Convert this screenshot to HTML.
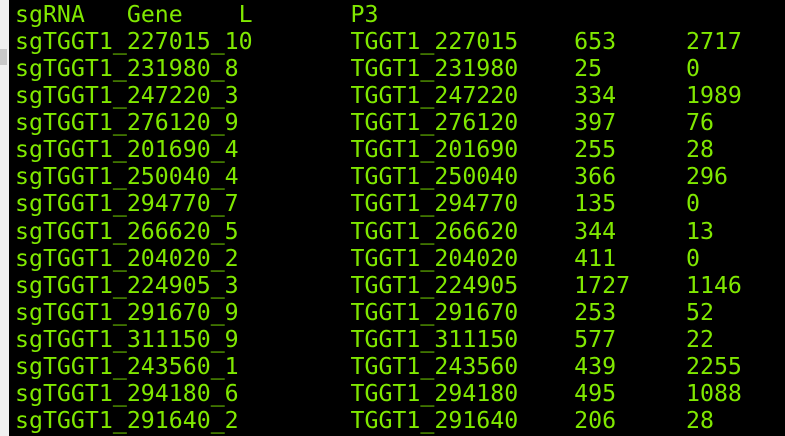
<!DOCTYPE html>
<html><head><style>
html,body{margin:0;padding:0;width:785px;height:436px;overflow:hidden;background:#000;}
.strip{position:absolute;left:0;top:0;width:9px;height:436px;background:#f0f0f0;}
.box{position:absolute;left:0;top:49px;width:7px;height:16px;background:#c8c8c8;}
pre{position:absolute;left:15px;top:1px;margin:0;font-family:"DejaVu Sans Mono","Liberation Mono",monospace;font-size:23.22px;line-height:27.07px;color:#80e800;tab-size:8;-moz-tab-size:8;white-space:pre;}
</style></head><body>
<div class="strip"></div><div class="box"></div>
<pre>sgRNA	Gene	L	P3
sgTGGT1_227015_10	TGGT1_227015	653	2717
sgTGGT1_231980_8	TGGT1_231980	25	0
sgTGGT1_247220_3	TGGT1_247220	334	1989
sgTGGT1_276120_9	TGGT1_276120	397	76
sgTGGT1_201690_4	TGGT1_201690	255	28
sgTGGT1_250040_4	TGGT1_250040	366	296
sgTGGT1_294770_7	TGGT1_294770	135	0
sgTGGT1_266620_5	TGGT1_266620	344	13
sgTGGT1_204020_2	TGGT1_204020	411	0
sgTGGT1_224905_3	TGGT1_224905	1727	1146
sgTGGT1_291670_9	TGGT1_291670	253	52
sgTGGT1_311150_9	TGGT1_311150	577	22
sgTGGT1_243560_1	TGGT1_243560	439	2255
sgTGGT1_294180_6	TGGT1_294180	495	1088
sgTGGT1_291640_2	TGGT1_291640	206	28</pre>
</body></html>
